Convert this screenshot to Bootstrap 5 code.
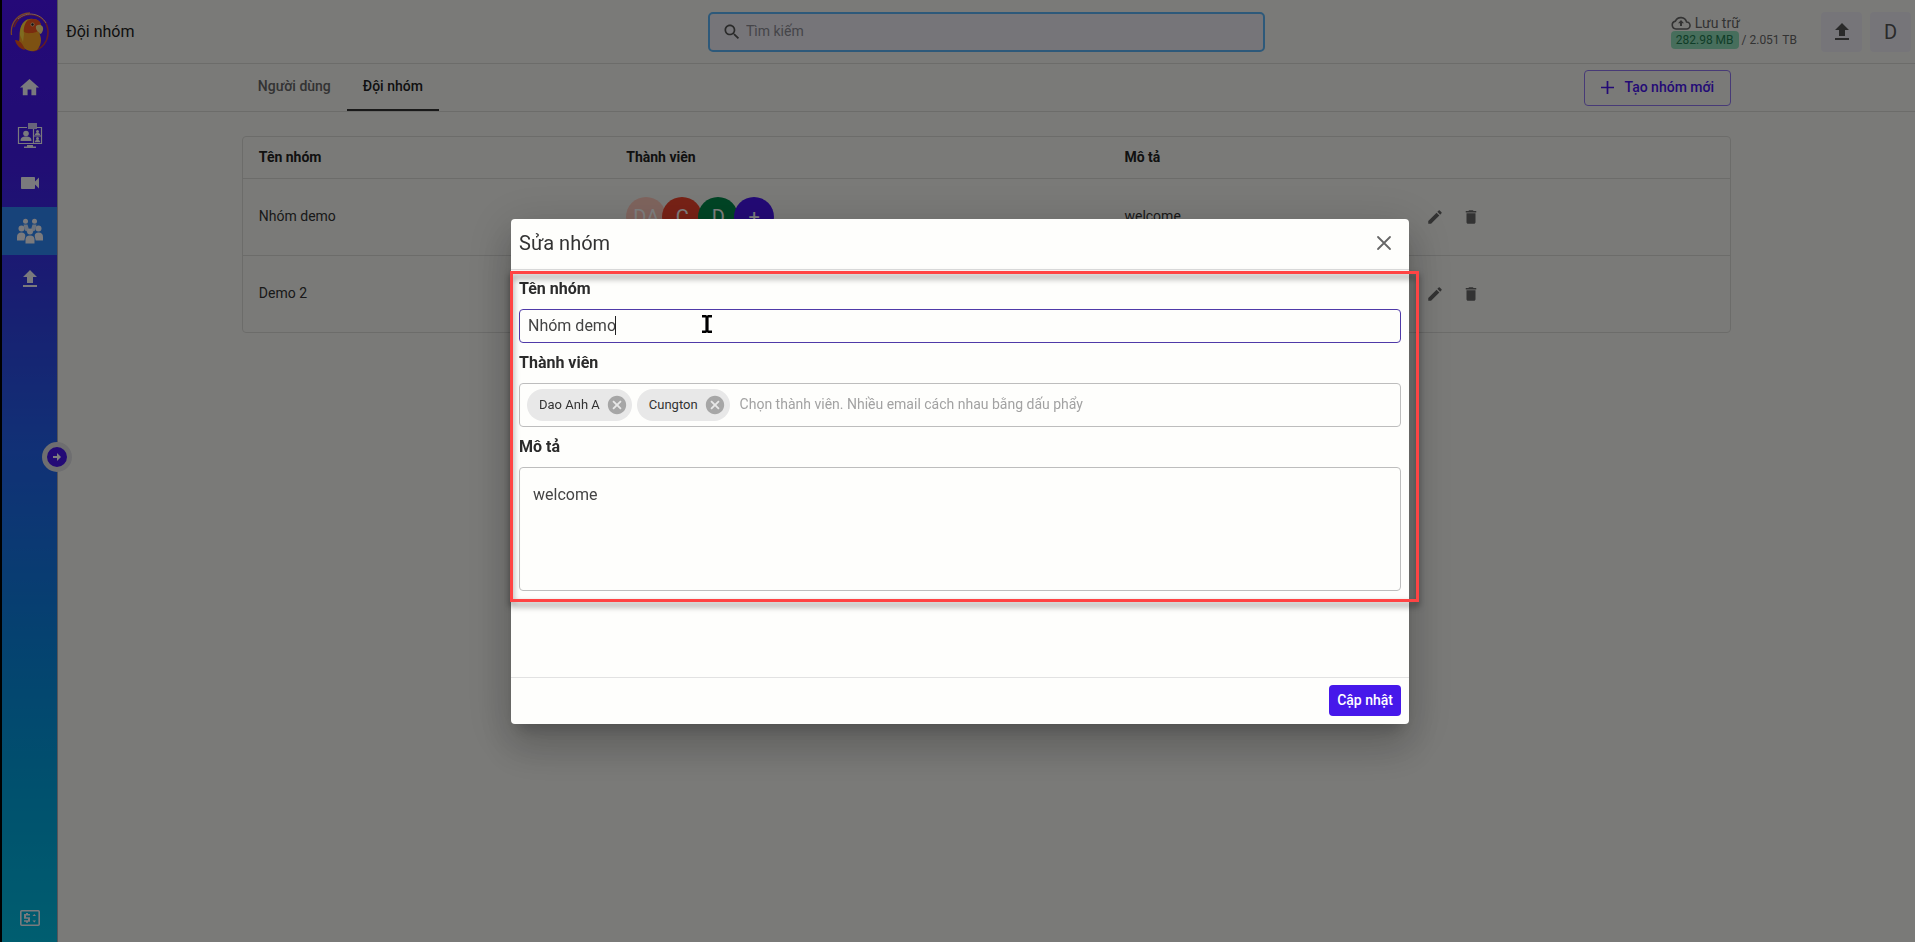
<!DOCTYPE html>
<html lang="vi">
<head>
<meta charset="utf-8">
<meta name="viewport" content="width=device-width, initial-scale=1">
<title>Đội nhóm</title>
<link href="https://cdn.jsdelivr.net/npm/bootstrap@5.3.0/dist/css/bootstrap.min.css" rel="stylesheet">
<style>
  :root { --brand: #4714ec; --page: #f5f5f1; --rule: #d8d8d5; }
  body { font-family: Roboto, "Liberation Sans", sans-serif; font-size: 14px; background: var(--page); color: #333; overflow: hidden; }
  svg { display: block; fill: currentColor; }

  .shell { min-height: 100vh; border-left: 2px solid #000; }
  .rail { width: 56px; border-right: 1px solid #a8a8b4; background: linear-gradient(#4a12f0 0, #421ce8 18%, #3040e4 33%, #2262ec 48%, #0a84e0 68%, #00a4dc 85%, #00bce0 100%); color: #f4f4fa; }
  .rail a { height: 48px; color: inherit; }
  .rail a.on { background: #2f86f4; }
  .rail a.logo { height: 63px; }
  .rail-toggle { top: 442px; left: 40px; width: 30px; height: 30px; border: 5px solid #dcdce0; background: var(--brand); color: #fff; z-index: 2; }

  .topbar { display: grid; grid-template-columns: 1fr 30% 1fr; height: 64px; border-bottom: 1px solid var(--rule); }
  .topbar h1 { font-size: 16px; color: #222; }
  .search-box { height: 40px; border: 2px solid #5ab2f4; border-radius: 5px; background: #ecebf3; color: #555; }
  .search-box input { font-size: 14px; background: none; outline: 0; }
  .search-box input::placeholder { color: #8a8a92; }
  .storage { font-size: 12px; color: #666; line-height: 18px; }
  .storage-title { font-size: 14px; line-height: 16px; }
  .used { background: #8fdcb8; color: #1f7a50; padding: 0 5px; }
  .square-btn { width: 41px; height: 40px; background: #ecebf3; color: #555; font-size: 20px; }

  .subbar { height: 48px; border-bottom: 1px solid var(--rule); }
  .wrap { width: 80.2%; }
  .tabs a { padding: 0 16px; color: #666; font-weight: 500; border-bottom: 2px solid transparent; }
  .tabs a.on { color: #222; border-color: #333; }
  .new-btn { height: 36px; border: 1px solid #8f75ee; color: var(--brand); font-weight: 500; font-size: 14px; padding: 0 16px; gap: 11px; }

  .teams { border: 1px solid var(--rule); border-radius: 4px; }
  .teams table { table-layout: fixed; --bs-table-bg: transparent; --bs-table-color: #333; }
  .teams th, .teams td { padding: 0 16px; border-color: var(--rule); vertical-align: middle; }
  .teams th { height: 41px; font-weight: 700; color: #222; }
  .teams td { height: 77px; }
  .teams tr:last-child td { border-bottom: 0; }
  .avatar { width: 40px; height: 40px; font-size: 20px; color: #fff; margin-right: -4px; border: 0; }
  .icon-btn { width: 36px; height: 36px; color: #666; border: 0; background: none; }

  .modal-backdrop { --bs-backdrop-opacity: .5; }
  .edit-modal { padding-left: 5px; color: #333; }
  .edit-modal .modal-dialog { max-width: 898px; }
  .edit-modal .modal-content { border: 0; border-radius: 4px; background: #fefefc; box-shadow: 0 11px 15px -7px rgba(0,0,0,.2), 0 24px 38px 3px rgba(0,0,0,.14), 0 9px 46px 8px rgba(0,0,0,.12); }
  .edit-modal .modal-header { height: 51px; padding: 0 16px 2px 8px; border-color: #ddd; }
  .edit-modal .modal-title { font-size: 20px; font-weight: 400; }
  .edit-modal .modal-body { padding: 7px 8px 86px; }
  .edit-modal .modal-footer { height: 47px; padding: 0 8px; border-color: #e2e2e2; }
  .edit-modal .modal-footer > * { margin: 0; }
  .field-label { display: block; font-size: 16px; line-height: 24px; font-weight: 700; margin: 0 0 8px; color: #2b2b2b; }
  .field { border: 1px solid #bdbdbd; border-radius: 4px; margin-bottom: 8px; }
  .name-field { height: 34px; border-color: #4f3aa8; }
  .name-field input, .desc { font-size: 16px; color: #444; }
  .name-field input { padding: 0 8px; background: none; outline: 0; }
  .text-caret { top: 6px; left: 95px; width: 1px; height: 19px; background: #222; }
  .pointer { top: 5px; left: 182px; color: #000; }
  .member-field { height: 44px; padding: 0 7px; gap: 5px; }
  .chip { height: 32px; padding: 0 4px 0 12px; gap: 6px; border-radius: 16px; background: #e8e8e8; font-size: 13px; }
  .chip button { color: #a6a6a6; }
  .member-field input { font-size: 14px; outline: 0; background: none; padding: 0 0 0 5px; }
  .member-field input::placeholder { color: #a2a2a2; }
  .desc { display: block; width: 100%; height: 124px; padding: 15px 13px; resize: none; background: none; outline: 0; margin: 0; line-height: 24px; }
  .save-btn { height: 31px; padding: 0 8px; border: 0; border-radius: 4px; background: #4618ea; color: #fff; font-size: 14px; font-weight: 500; }
  .outline-frame { top: 1px; left: -1px; right: -10px; height: 331px; border: 3px solid #ff4444; pointer-events: none; filter: drop-shadow(0 4px 3px rgba(0,0,0,.5)); }
</style>
</head>
<body>
<div class="shell d-flex">
  <nav class="rail position-relative d-flex flex-column flex-shrink-0">
    <a href="#" class="logo d-flex align-items-center justify-content-center" aria-label="Trang chủ">
      <svg width="40" height="42" viewBox="0 0 40 42">
        <path d="M1.500 24C0 12 8 2 20 2" fill="none" stroke="#f08a50" stroke-width="1.300"/>
        <path d="M4 16C7 7 14 3 21 3.500 31 4 38 11 38 21c0 10-6 17-15 19" fill="none" stroke="#c43a4a" stroke-width="1.600"/>
        <path d="M8 8C17 0 30 2 36 12" fill="none" stroke="#e4b4c8" stroke-width="1"/>
        <path d="M9 31c1-4 0-8 1-12C12 11 17 7 23 8c5 0 8 3 8 7 0 4-2 6-1 9 2 5 1 10-3 15-6 3-14 0-18-8z" fill="#fba324"/>
        <path d="M13 20c0-7 4-12 10-12 5 0 8 3 8 7-2 5-4 6-8 7-4 0-7 1-10-2z" fill="#f4561e"/>
        <path d="M10 24c0-8 2-13 8-16-3 4-5 9-4 15l-1 8z" fill="#ffd840"/>
        <path d="M26 15c4-3 8 0 7 4-1 3-2 4-3 4 0-2-5-3-4-8z" fill="#fbe08a"/>
        <circle cx="22.500" cy="13.500" r="2" fill="#fbd0a0"/><circle cx="22.500" cy="13.500" r="1.200" fill="#222"/>
        <path d="M5 29c5 0 8 4 10 10-5-1-9-5-10-10z" fill="#ec5420"/>
      </svg>
    </a>
    <a href="#" class="d-flex align-items-center justify-content-center" aria-label="Trang chính"><svg width="23" height="23" viewBox="0 0 24 24"><path d="M10 20v-6h4v6h5v-8h3L12 3 2 12h3v8z"/></svg></a>
    <a href="#" class="d-flex align-items-center justify-content-center" aria-label="Phòng họp">
      <svg width="26" height="26" viewBox="0 0 26 26">
        <path d="M10 5.500H1.500v16h23v-16h-5M16.500 7v14.500M17 14h7" fill="none" stroke="currentColor" stroke-width="1.200"/>
        <path d="M11 1h9v6h-9z" opacity=".8"/><path d="M10 23h6v1.500h3V26H7v-1.500h3z"/>
        <circle cx="9" cy="11.500" r="2.800"/><path d="M3.500 19c0-3.500 2-4.500 5.500-4.500s5.500 1 5.500 4.500z"/>
        <circle cx="20.500" cy="9.500" r="1.500"/><path d="M17.800 13.200c0-1.700 1-2.200 2.700-2.200s2.700.5 2.700 2.200z"/>
        <circle cx="20.500" cy="16.500" r="1.500"/><path d="M17.800 20.300c0-1.700 1-2.300 2.700-2.300s2.700.6 2.700 2.300z"/>
      </svg>
    </a>
    <a href="#" class="d-flex align-items-center justify-content-center" aria-label="Video"><svg width="24" height="24" viewBox="0 0 24 24"><path d="M17 10.500V7c0-.55-.45-1-1-1H4c-.55 0-1 .45-1 1v10c0 .55.45 1 1 1h12c.55 0 1-.45 1-1v-3.500l4 4v-11l-4 4z"/></svg></a>
    <a href="#" class="on d-flex align-items-center justify-content-center" aria-label="Đội nhóm">
      <svg width="26" height="26" viewBox="0 0 26 26">
        <circle cx="8.500" cy="3.200" r="2.500"/><circle cx="17.500" cy="3.200" r="2.500"/>
        <path d="M6.500 6.500h4l1.500 5-2 2-2-1zM19.500 6.500h-4l-1.500 5 2 2 2-1z" opacity=".85"/>
        <circle cx="4.500" cy="10.500" r="3"/><circle cx="21.500" cy="10.500" r="3"/>
        <path d="M0 22.500V19c0-3 1.500-4.500 4.500-4.500 2.500 0 3.800 1.300 3.800 3.500l-1 4.500zM26 22.500V19c0-3-1.500-4.500-4.500-4.500-2.500 0-3.800 1.300-3.800 3.500l1 4.500z"/>
        <circle cx="13" cy="13.500" r="3"/><path d="M8.500 25.500V21.500c0-2.500 1.500-4 4.500-4s4.500 1.500 4.500 4v4z"/>
      </svg>
    </a>
    <a href="#" class="d-flex align-items-center justify-content-center" aria-label="Tải lên"><svg width="24" height="24" viewBox="0 0 24 24"><path d="M9 16v-6H5l7-7 7 7h-4v6H9zm-4 2h14v2H5z"/></svg></a>
    <a href="#" class="mt-auto d-flex align-items-center justify-content-center" aria-label="Thanh toán">
      <svg width="20" height="16" viewBox="0 0 20 16"><rect x=".8" y=".8" width="18.400" height="14.400" rx="1" fill="none" stroke="currentColor" stroke-width="1.600"/><path d="M10 5.500V4H8V3H6v1H4v4.800h4v1.400H4v1.500h2v1h2v-1h2V7.300H6V5.500zM12.500 6h3.500l-1.700-2zM12.500 10.500h3.500l-1.700 2z"/></svg>
    </a>
    <button class="rail-toggle position-absolute rounded-circle p-0 d-flex align-items-center justify-content-center" aria-label="Mở rộng"><svg width="10" height="10" viewBox="0 0 10 10"><path d="M1 4h4V1l4 4-4 4V6H1z"/></svg></button>
  </nav>

  <div class="flex-grow-1">
    <header class="topbar align-items-center">
      <h1 class="m-0 ps-2 fw-normal">Đội nhóm</h1>
      <label class="search-box d-flex align-items-center gap-1 ps-2">
        <svg class="ms-1" width="20" height="20" viewBox="0 0 24 24"><path d="M15.500 14h-.79l-.28-.27C15.410 12.590 16 11.110 16 9.500 16 5.910 13.090 3 9.500 3S3 5.910 3 9.500 5.910 16 9.500 16c1.610 0 3.090-.59 4.230-1.570l.27.28v.79l5 4.990L20.490 19l-4.990-5zm-6 0C7.010 14 5 11.990 5 9.500S7.010 5 9.500 5 14 7.010 14 9.500 11.990 14 9.500 14z"/></svg>
        <input type="text" class="border-0 flex-grow-1 p-0" placeholder="Tìm kiếm" aria-label="Tìm kiếm">
      </label>
      <div class="d-flex align-items-center justify-content-end pe-1">
        <div class="storage me-4">
          <div class="storage-title d-flex align-items-center gap-1">
            <svg width="20" height="14" viewBox="0 0 20 14"><path d="M5 13a4 4 0 0 1-.6-7.900A6 6 0 0 1 15.600 6 3.500 3.500 0 0 1 15.500 13z" fill="none" stroke="currentColor" stroke-width="1.600"/><path d="M10 4l3 3.200h-2V10H9V7.200H7z"/></svg>Lưu trữ
          </div>
          <span class="used d-inline-block rounded-1">282.98 MB</span> / 2.051 TB
        </div>
        <button class="square-btn btn p-0 rounded-1 d-flex align-items-center justify-content-center me-2" aria-label="Tải lên"><svg width="24" height="24" viewBox="0 0 24 24"><path d="M9 16v-6H5l7-7 7 7h-4v6H9zm-4 2h14v2H5z"/></svg></button>
        <button class="square-btn btn p-0 rounded-1">D</button>
      </div>
    </header>

    <div class="subbar">
      <div class="wrap mx-auto h-100 d-flex justify-content-between align-items-center">
        <nav class="tabs d-flex h-100">
          <a href="#" class="text-decoration-none d-flex align-items-center">Người dùng</a>
          <a href="#" class="on text-decoration-none d-flex align-items-center">Đội nhóm</a>
        </nav>
        <button class="new-btn btn rounded-1 d-flex align-items-center"><svg width="13" height="13" viewBox="0 0 12 12"><path d="M5.200 0h1.600v5.200H12v1.600H6.800V12H5.200V6.800H0V5.200h5.200z"/></svg>Tạo nhóm mới</button>
      </div>
    </div>

    <main class="wrap mx-auto pt-4">
      <div class="teams">
        <table class="table mb-0">
          <colgroup><col style="width:24.700%"><col style="width:33.500%"><col style="width:20.500%"><col></colgroup>
          <thead><tr><th>Tên nhóm</th><th>Thành viên</th><th>Mô tả</th><th></th></tr></thead>
          <tbody>
            <tr>
              <td>Nhóm demo</td>
              <td><div class="d-flex">
                <span class="avatar rounded-circle d-flex align-items-center justify-content-center" style="background:#ffc9bc">DA</span>
                <span class="avatar rounded-circle d-flex align-items-center justify-content-center" style="background:#f0442c">C</span>
                <span class="avatar rounded-circle d-flex align-items-center justify-content-center" style="background:#008a4a">D</span>
                <button class="avatar rounded-circle p-0" style="background:#4714ec" aria-label="Thêm thành viên">+</button>
              </div></td>
              <td>welcome</td>
              <td class="ps-1"><div class="d-flex">
                <button class="icon-btn p-0 d-flex align-items-center justify-content-center" aria-label="Sửa"><svg width="18" height="18" viewBox="0 0 24 24"><path d="M3 17.250V21h3.750L17.810 9.940l-3.750-3.750L3 17.250zM20.710 7.040c.39-.39.39-1.020 0-1.410l-2.340-2.340c-.39-.39-1.020-.39-1.410 0l-1.830 1.830 3.750 3.750 1.830-1.830z"/></svg></button>
                <button class="icon-btn p-0 d-flex align-items-center justify-content-center" aria-label="Xóa"><svg width="18" height="18" viewBox="0 0 24 24"><path d="M6 19c0 1.100.9 2 2 2h8c1.100 0 2-.9 2-2V7H6v12zM19 4h-3.500l-1-1h-5l-1 1H5v2h14V4z"/></svg></button>
              </div></td>
            </tr>
            <tr>
              <td>Demo 2</td><td></td><td></td>
              <td class="ps-1"><div class="d-flex">
                <button class="icon-btn p-0 d-flex align-items-center justify-content-center" aria-label="Sửa"><svg width="18" height="18" viewBox="0 0 24 24"><path d="M3 17.250V21h3.750L17.810 9.940l-3.750-3.750L3 17.250zM20.710 7.040c.39-.39.39-1.020 0-1.410l-2.340-2.340c-.39-.39-1.020-.39-1.410 0l-1.830 1.830 3.750 3.750 1.830-1.830z"/></svg></button>
                <button class="icon-btn p-0 d-flex align-items-center justify-content-center" aria-label="Xóa"><svg width="18" height="18" viewBox="0 0 24 24"><path d="M6 19c0 1.100.9 2 2 2h8c1.100 0 2-.9 2-2V7H6v12zM19 4h-3.500l-1-1h-5l-1 1H5v2h14V4z"/></svg></button>
              </div></td>
            </tr>
          </tbody>
        </table>
      </div>
    </main>
  </div>
</div>

<div class="modal-backdrop show"></div>
<div class="edit-modal modal d-block" role="dialog" aria-labelledby="edit-title">
  <div class="modal-dialog modal-dialog-centered">
    <form class="modal-content">
      <div class="modal-header">
        <h2 class="modal-title" id="edit-title">Sửa nhóm</h2>
        <button type="button" class="btn p-0 border-0" aria-label="Đóng"><svg width="18" height="18" viewBox="0 0 18 18"><path d="M3 3l12 12M15 3L3 15" stroke="#666" stroke-width="1.800" stroke-linecap="round"/></svg></button>
      </div>
      <div class="modal-body">
        <label class="field-label" for="team-name">Tên nhóm</label>
        <div class="field name-field position-relative">
          <input id="team-name" type="text" class="w-100 h-100 border-0" value="Nhóm demo">
          <span class="text-caret position-absolute"></span>
          <svg class="pointer position-absolute" width="10" height="18" viewBox="0 0 10 18"><path d="M0 0h4l1 .8L6 0h4v2.500H6.600v13H10V18H6l-1-.8-1 .8H0v-2.500h3.400v-13H0z"/></svg>
        </div>
        <label class="field-label" for="team-members">Thành viên</label>
        <div class="field member-field d-flex align-items-center">
          <span class="chip d-flex align-items-center">Dao Anh A<button type="button" class="btn p-0 border-0" aria-label="Bỏ Dao Anh A"><svg width="22" height="22" viewBox="0 0 24 24"><path d="M12 2C6.470 2 2 6.470 2 12s4.470 10 10 10 10-4.470 10-10S17.530 2 12 2zm5 13.590L15.590 17 12 13.410 8.410 17 7 15.590 10.590 12 7 8.410 8.410 7 12 10.590 15.590 7 17 8.410 13.410 12 17 15.590z"/></svg></button></span>
          <span class="chip d-flex align-items-center">Cungton<button type="button" class="btn p-0 border-0" aria-label="Bỏ Cungton"><svg width="22" height="22" viewBox="0 0 24 24"><path d="M12 2C6.470 2 2 6.470 2 12s4.470 10 10 10 10-4.470 10-10S17.530 2 12 2zm5 13.590L15.590 17 12 13.410 8.410 17 7 15.590 10.590 12 7 8.410 8.410 7 12 10.590 15.590 7 17 8.410 13.410 12 17 15.590z"/></svg></button></span>
          <input id="team-members" type="text" class="border-0 flex-grow-1" placeholder="Chọn thành viên. Nhiều email cách nhau bằng dấu phẩy">
        </div>
        <label class="field-label" for="team-desc">Mô tả</label>
        <textarea id="team-desc" class="field desc">welcome</textarea>
        <div class="outline-frame position-absolute"></div>
      </div>
      <div class="modal-footer">
        <button type="submit" class="save-btn">Cập nhật</button>
      </div>
    </form>
  </div>
</div>
<script src="https://cdn.jsdelivr.net/npm/bootstrap@5.3.0/dist/js/bootstrap.bundle.min.js"></script>
</body>
</html>
